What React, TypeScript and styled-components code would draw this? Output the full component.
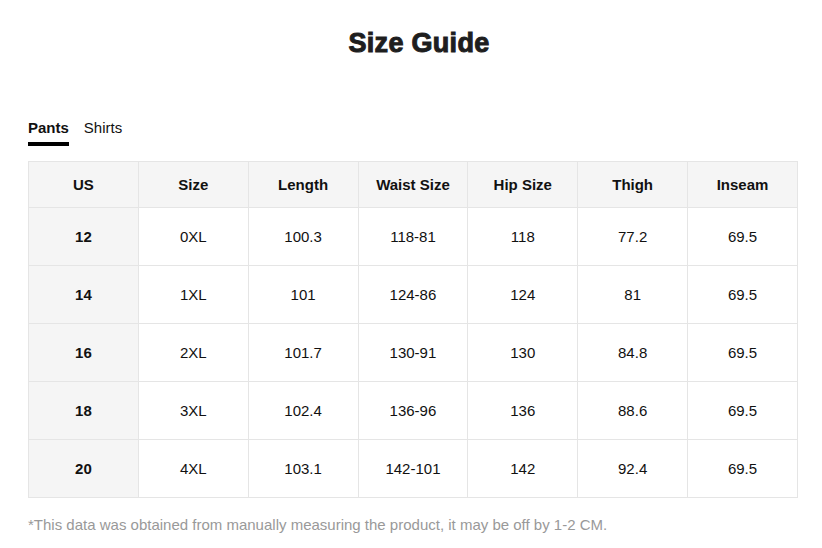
import React, { useState } from "react";
import styled, { createGlobalStyle } from "styled-components";

const Global = createGlobalStyle`
  html, body { margin: 0; padding: 0; background: #fff; }
  body { font-family: "Liberation Sans", Arial, sans-serif; color: #222; }
`;

const Page = styled.div`
  width: 770px;
  padding: 26px 25px 0 28px;
`;

const Title = styled.h1`
  margin: 0;
  text-align: center;
  font-family: "Liberation Sans", Arial, sans-serif;
  font-size: 27px;
  font-weight: 700;
  line-height: 34px;
  color: #1e1e1e;
  -webkit-text-stroke: 1px #1e1e1e;
  letter-spacing: 0.3px;
  padding-left: 12px;
`;

const Tabs = styled.div`
  display: flex;
  gap: 15px;
  margin-top: 59px;
`;

const Tab = styled.button<{ $active: boolean }>`
  all: unset;
  cursor: pointer;
  font-family: "Liberation Sans", Arial, sans-serif;
  font-size: 15px;
  line-height: 18px;
  font-weight: ${(p) => (p.$active ? 700 : 400)};
  color: #111;
  padding-bottom: 5px;
  border-bottom: 4px solid ${(p) => (p.$active ? "#000" : "transparent")};
`;

const Table = styled.table`
  margin-top: 15px;
  width: 770px;
  border-collapse: collapse;
  table-layout: fixed;
  font-size: 15px;
`;

const HeadCell = styled.th`
  height: 45px;
  border: 1px solid #e5e5e5;
  background: #f5f5f5;
  font-family: "Liberation Sans", Arial, sans-serif;
  font-weight: 700;
  color: #111;
  text-align: center;
  padding: 0;
`;

const Cell = styled.td<{ $first?: boolean }>`
  height: 57px;
  border: 1px solid #e5e5e5;
  background: ${(p) => (p.$first ? "#f5f5f5" : "#fff")};
  font-weight: ${(p) => (p.$first ? 700 : 400)};
  color: #111;
  text-align: center;
  padding: 0;
`;

const Note = styled.p`
  margin: 18px 0 0;
  font-size: 15px;
  line-height: 18px;
  color: #999;
`;

const headers = ["US", "Size", "Length", "Waist Size", "Hip Size", "Thigh", "Inseam"];
const rows = [
  ["12", "0XL", "100.3", "118-81", "118", "77.2", "69.5"],
  ["14", "1XL", "101", "124-86", "124", "81", "69.5"],
  ["16", "2XL", "101.7", "130-91", "130", "84.8", "69.5"],
  ["18", "3XL", "102.4", "136-96", "136", "88.6", "69.5"],
  ["20", "4XL", "103.1", "142-101", "142", "92.4", "69.5"],
];

export default function App() {
  const [tab, setTab] = useState("Pants");
  return (
    <Page>
      <Global />
      <Title>Size Guide</Title>
      <Tabs>
        {["Pants", "Shirts"].map((t) => (
          <Tab key={t} $active={tab === t} onClick={() => setTab(t)}>
            {t}
          </Tab>
        ))}
      </Tabs>
      <Table>
        <thead>
          <tr>
            {headers.map((h) => (
              <HeadCell key={h}>{h}</HeadCell>
            ))}
          </tr>
        </thead>
        <tbody>
          {rows.map((r) => (
            <tr key={r[0]}>
              {r.map((c, i) => (
                <Cell key={i} $first={i === 0}>
                  {c}
                </Cell>
              ))}
            </tr>
          ))}
        </tbody>
      </Table>
      <Note>*This data was obtained from manually measuring the product, it may be off by 1-2 CM.</Note>
    </Page>
  );
}
